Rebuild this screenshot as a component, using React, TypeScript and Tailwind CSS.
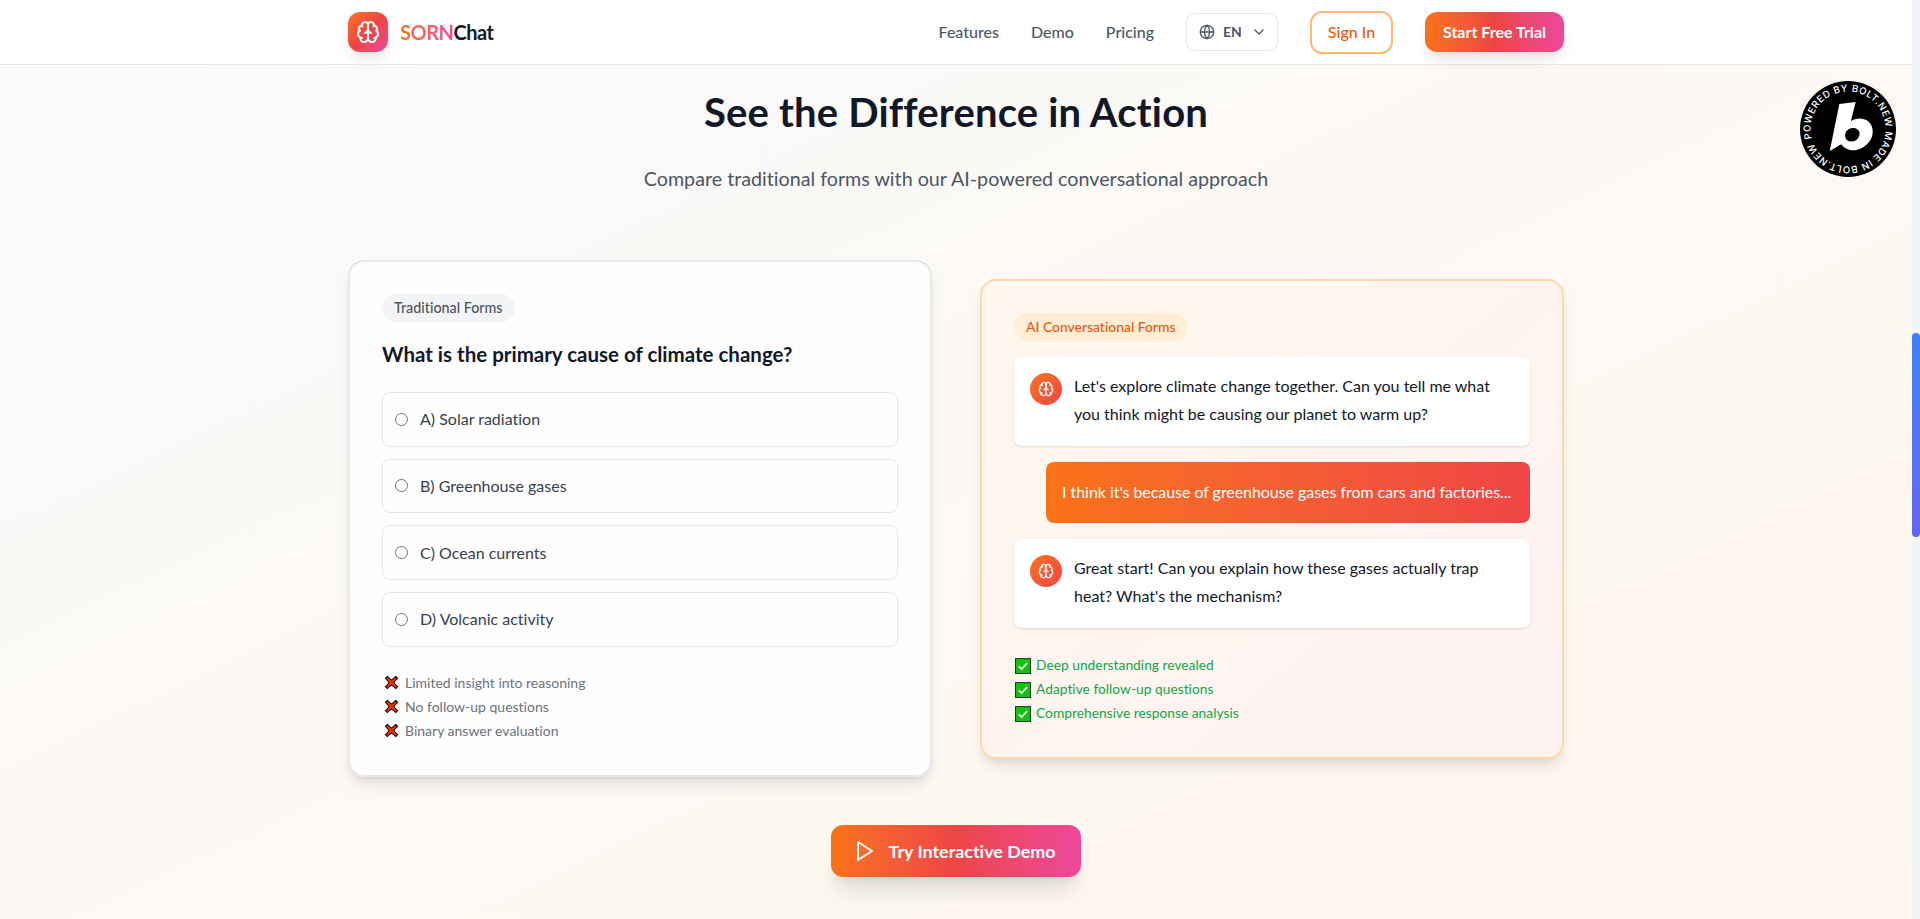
import React from "react";
import { Brain, Globe, ChevronDown } from "lucide-react";

const CrossMark = () => (
  <svg viewBox="0 0 16 16" className="w-[15px] h-[15px] ml-[2px] shrink-0">
    <path d="M1.5 3.5 3.5 1.5 8 5.5 12.5 1.5 14.5 3.5 10.5 8 14.5 12.5 12.5 14.5 8 10.5 3.5 14.5 1.5 12.5 5.5 8Z" fill="#e8330f" stroke="#111" strokeWidth="1.1" />
  </svg>
);
const CheckMark = () => (
  <svg viewBox="0 0 16 16" className="w-4 h-4 ml-[1px] shrink-0">
    <rect x="0.5" y="0.5" width="15" height="15" fill="#10c20a" stroke="#26382a" />
    <path d="M3.8 8.4 6.6 11 12.2 5" fill="none" stroke="#fff" strokeWidth="1.6" />
  </svg>
);

const AiBubble = ({ lines }: { lines: string }) => (
  <div className="flex gap-3 bg-white rounded-lg shadow-sm p-4 h-[89px]">
    <div className="w-8 h-8 rounded-full bg-gradient-to-br from-[#f97316] to-[#ef4444] flex items-center justify-center shrink-0">
      <Brain className="w-4 h-4 text-white" />
    </div>
    <p className="text-base leading-[28px] text-[#111827] -mt-[1px]">{lines}</p>
  </div>
);

const options = ["A) Solar radiation", "B) Greenhouse gases", "C) Ocean currents", "D) Volcanic activity"];
const cons = ["Limited insight into reasoning", "No follow-up questions", "Binary answer evaluation"];
const pros = ["Deep understanding revealed", "Adaptive follow-up questions", "Comprehensive response analysis"];

export default function App() {
  return (
    <div className="h-[919px] overflow-hidden flex font-['Lato',sans-serif] [font-variant-ligatures:none] relative">
      <div className="flex-1 min-w-0 flex flex-col bg-gradient-to-br from-[#f9fafb] to-[#fff7ed]">
        <header className="h-[65px] shrink-0 bg-white border-b border-[#e5e7eb]">
          <div className="max-w-7xl mx-auto px-8 h-16 flex items-center justify-between">
            <div className="flex items-center gap-3">
              <div className="w-10 h-10 rounded-xl bg-gradient-to-br from-[#f97316] via-[#ef4444] to-[#ec4899] flex items-center justify-center shadow-lg">
                <Brain className="w-6 h-6 text-white" />
              </div>
              <span className="text-xl font-bold text-[#111827] tracking-[-0.5px]">
                <span className="bg-gradient-to-r from-[#f97316] to-[#ec4899] bg-clip-text text-transparent">SORN</span>Chat
              </span>
            </div>
            <nav className="flex items-center">
              <a className="text-base font-medium text-[#4b5563]">Features</a>
              <a className="ml-8 text-base font-medium text-[#4b5563]">Demo</a>
              <a className="ml-8 text-base font-medium text-[#4b5563]">Pricing</a>
              <div className="ml-8 w-[92px] h-[38px] border border-[#e5e7eb] rounded-lg flex items-center pl-3 gap-2 text-[#4b5563]">
                <Globe className="w-4 h-4" />
                <span className="text-sm font-bold">EN</span>
                <ChevronDown className="w-4 h-4 ml-[1px]" />
              </div>
              <button className="ml-8 w-[83px] h-[43px] border-2 border-[#fdba74] rounded-xl text-base font-medium text-[#ea580c]">Sign In</button>
              <button className="ml-8 w-[139px] h-10 rounded-xl bg-gradient-to-r from-[#f97316] via-[#ef4444] to-[#ec4899] text-white text-base font-bold shadow-lg">Start Free Trial</button>
            </nav>
          </div>
        </header>

        <main className="max-w-7xl w-full mx-auto px-8">
          <h2 className="text-[40px] font-bold text-[#111827] text-center mt-[23px] leading-[48px] tracking-[0.18px]">See the Difference in Action</h2>
          <p className="text-[19.7px] text-[#4b5563] text-center mt-[29px] leading-7">Compare traditional forms with our AI-powered conversational approach</p>

          <div className="grid grid-cols-2 gap-12 items-center mt-[67px]">
            <div className="h-[517px] bg-[#fefefd] border-2 border-[#e5e7eb] rounded-2xl shadow-lg p-8">
              <span className="inline-block px-3 py-1 rounded-full bg-[#f3f4f6] text-[14.3px] leading-5 font-medium text-[#4b5563]">Traditional Forms</span>
              <h3 className="text-[20.5px] font-bold text-[#111827] mt-[18px] leading-7">What is the primary cause of climate change?</h3>
              <div className="mt-6 flex flex-col gap-3">
                {options.map((o) => (
                  <label key={o} className="h-[54.67px] flex items-center gap-3 border border-[#e5e7eb] rounded-lg px-3">
                    <span className="w-[13px] h-[13px] rounded-full border border-[#6b7280] shrink-0" />
                    <span className="text-base text-[#374151]">{o}</span>
                  </label>
                ))}
              </div>
              <ul className="mt-6 flex flex-col">
                {cons.map((c) => (
                  <li key={c} className="h-6 flex items-center gap-[6px] text-sm text-[#6b7280]"><CrossMark />{c}</li>
                ))}
              </ul>
            </div>

            <div className="h-[480px] bg-gradient-to-br from-[#fff7ed] to-[#fef2f2] border-2 border-[#fed7aa] rounded-2xl shadow-lg p-8">
              <span className="inline-block px-3 py-1 rounded-full bg-[#ffedd5] text-[13.9px] leading-5 font-medium text-[#ea580c]">AI Conversational Forms</span>
              <div className="mt-4 flex flex-col gap-4">
                <AiBubble lines="Let's explore climate change together. Can you tell me what you think might be causing our planet to warm up?" />
                <div className="ml-8 h-[61px] rounded-lg bg-gradient-to-r from-[#f97316] to-[#ef4444] text-white text-[15.9px] whitespace-nowrap flex items-center px-4">I think it's because of greenhouse gases from cars and factories...</div>
                <AiBubble lines="Great start! Can you explain how these gases actually trap heat? What's the mechanism?" />
              </div>
              <ul className="mt-[26px] flex flex-col">
                {pros.map((c) => (
                  <li key={c} className="h-6 flex items-center gap-[5px] text-[13.8px] text-[#16a34a]"><CheckMark />{c}</li>
                ))}
              </ul>
            </div>
          </div>

          <div className="flex justify-center mt-[48px]">
            <button className="w-[250px] h-[52px] rounded-xl bg-gradient-to-r from-[#f97316] via-[#ef4444] to-[#ec4899] text-white text-[17.9px] font-bold shadow-xl flex items-center justify-center gap-3">
              <svg viewBox="0 0 24 24" className="w-6 h-6 -ml-1" fill="none" stroke="currentColor" strokeWidth="2" strokeLinejoin="round"><polygon points="6 3 20 12 6 21 6 3" /></svg>
              Try Interactive Demo
            </button>
          </div>
        </main>
      </div>

      <aside className="w-2 shrink-0 bg-[#f1f5f9]">
        <div className="mt-[333px] h-[204px] rounded-full bg-gradient-to-b from-[#3b82f6] to-[#6366f1]" />
      </aside>

      <svg viewBox="0 0 100 100" className="absolute left-[1800px] top-[81px] w-[96px] h-[96px]">
        <circle cx="50" cy="50" r="50" fill="#000" />
        <defs>
          <path id="ring" d="M50 50 m-39 0 a39 39 0 1 1 78 0 a39 39 0 1 1 -78 0" />
        </defs>
        <text fill="#fff" fontSize="10" fontWeight="500" fontFamily="'Inter', sans-serif" transform="rotate(-15 50 50)">
          <textPath href="#ring" textLength="240" lengthAdjust="spacing">POWERED BY BOLT.NEW MADE IN BOLT.NEW</textPath>
        </text>
        <path fillRule="evenodd" fill="#fff" d="M41 24 58 22 53 42C58 38 66 38 71 42 77 47 77 56 73 62 68 70 59 73 52 72 48 71 45 69 43 66L31 73ZM55 49C50 49 47 53 47 57 47 61 50 63 54 63 59 63 62 59 62 55 62 51 59 49 55 49Z" />
      </svg>
    </div>
  );
}
